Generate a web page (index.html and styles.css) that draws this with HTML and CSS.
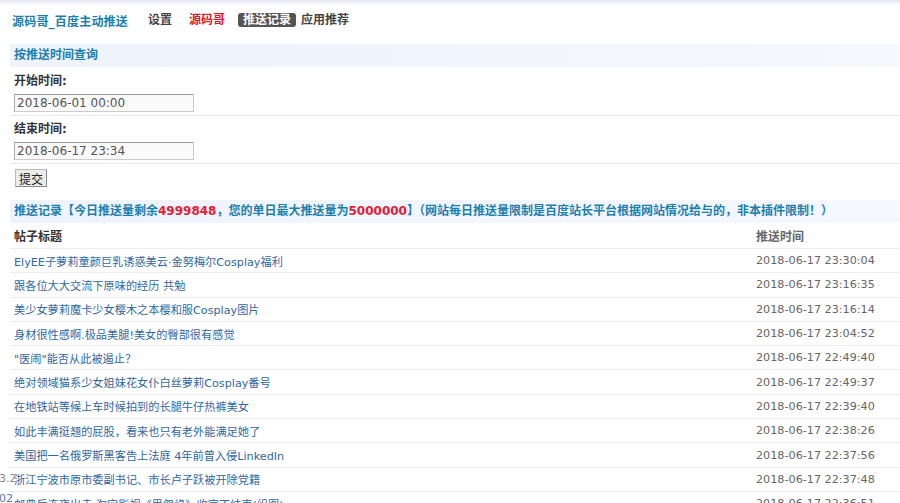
FILE: index.html
```html
<!DOCTYPE html>
<html lang="zh-CN">
<head>
    <meta charset="UTF-8">
    <title>源码哥_百度主动推送 - 推送记录</title>
    <link rel="stylesheet" href="styles.css">
</head>
<body>
    <div class="topbar"></div>
    <div class="wrap">
        <div class="nav">
            <span class="brand">源码哥_百度主动推送</span>
            <a href="#">设置</a>
            <a href="#" class="hot">源码哥</a>
            <a href="#" class="current">推送记录</a>
            <a href="#" class="last">应用推荐</a>
        </div>

        <form class="box">
            <h3 class="box-title">按推送时间查询</h3>
            <div class="field">
                <label>开始时间:</label>
                <input type="text" value="2018-06-01 00:00">
            </div>
            <div class="field">
                <label>结束时间:</label>
                <input type="text" value="2018-06-17 23:34">
            </div>
            <div class="submit-row">
                <button type="button">提交</button>
            </div>
        </form>

        <h3 class="box-title">推送记录【今日推送量剩余<em>4999848</em>，您的单日最大推送量为<em>5000000</em>】（网站每日推送量限制是百度站长平台根据网站情况给与的，非本插件限制！）</h3>

        <table class="log">
            <thead>
                <tr>
                    <th>帖子标题</th>
                    <th class="time">推送时间</th>
                </tr>
            </thead>
            <tbody>
                <tr><td><a href="#">ElyEE子萝莉童颜巨乳诱惑美云·金努梅尔Cosplay福利</a></td><td class="time">2018-06-17 23:30:04</td></tr>
                <tr><td><a href="#">跟各位大大交流下原味的经历 共勉</a></td><td class="time">2018-06-17 23:16:35</td></tr>
                <tr><td><a href="#">美少女萝莉魔卡少女樱木之本樱和服Cosplay图片</a></td><td class="time">2018-06-17 23:16:14</td></tr>
                <tr><td><a href="#">身材很性感啊.极品美腿!美女的臀部很有感觉</a></td><td class="time">2018-06-17 23:04:52</td></tr>
                <tr><td><a href="#">"医闹"能否从此被遏止？</a></td><td class="time">2018-06-17 22:49:40</td></tr>
                <tr><td><a href="#">绝对领域猫系少女姐妹花女仆白丝萝莉Cosplay番号</a></td><td class="time">2018-06-17 22:49:37</td></tr>
                <tr><td><a href="#">在地铁站等候上车时候拍到的长腿牛仔热裤美女</a></td><td class="time">2018-06-17 22:39:40</td></tr>
                <tr><td><a href="#">如此丰满挺翘的屁股，看来也只有老外能满足她了</a></td><td class="time">2018-06-17 22:38:26</td></tr>
                <tr><td><a href="#">美国把一名俄罗斯黑客告上法庭 4年前曾入侵LinkedIn</a></td><td class="time">2018-06-17 22:37:56</td></tr>
                <tr><td><a href="#">浙江宁波市原市委副书记、市长卢子跃被开除党籍</a></td><td class="time">2018-06-17 22:37:48</td></tr>
                <tr><td><a href="#">邮典后连夜出走 淘宝影视《思怨缘》收官不结束(组图)</a></td><td class="time">2018-06-17 22:36:51</td></tr>
            </tbody>
        </table>
    </div>

    <div class="side-peek">
        <span class="v">3.2</span>
        <span class="n">02</span>
    </div>
</body>
</html>
```

FILE: styles.css
```css
html, body {
    margin: 0;
    padding: 0;
    height: 100%;
    overflow: hidden;
    background: #fff;
    font-family: "DejaVu Sans", "Noto Sans CJK SC", sans-serif;
    font-size: 12px;
    color: #333;
}

.topbar {
    height: 4px;
    background: linear-gradient(#e2e8f3, #f3f6fb);
}

.wrap {
    padding-left: 10px;
}

/* top navigation */
.nav {
    display: flex;
    align-items: center;
    height: 32px;
    margin-left: 2px;
    margin-bottom: 8px;
    font-weight: bold;
}

.nav .brand {
    color: #1b7eaa;
    margin-right: 20px;
    letter-spacing: 0.2px;
}

.nav a {
    color: #444;
    text-decoration: none;
    margin-right: 17px;
    line-height: 14px;
}

    .nav a.hot {
        color: #d4202c;
        margin-right: 13px;
    }

    .nav a.current {
        background: #555;
        color: #fff;
        padding: 0 5px;
        border-radius: 3px;
        margin-right: 5px;
    }

/* boxes */
.box {
    margin: 0;
}

.box-title {
    margin: 0;
    height: 23px;
    line-height: 23px;
    padding-left: 4px;
    font-size: 12px;
    font-weight: bold;
    color: #1b80ad;
    background: linear-gradient(90deg, #eef3fc, #f3f6fd 70%, #f6f8fe);
    white-space: nowrap;
}

    .box-title em {
        font-style: normal;
        color: #e0203a;
    }

.field {
    padding: 3px 4px 3px;
    border-bottom: 1px solid #e6e6e6;
}

    .field + .field {
        padding-top: 2px;
    }

    .field label {
        display: block;
        height: 22px;
        line-height: 22px;
        font-weight: bold;
        color: #333;
    }

    .field input {
        display: block;
        box-sizing: border-box;
        width: 180px;
        height: 18px;
        margin-top: 2px;
        padding: 0 2px;
        border: 1px solid #ccc;
        border-top-color: #999;
        border-left-color: #aaa;
        background: #fafafa;
        font-family: "DejaVu Sans", sans-serif;
        font-size: 12px;
        color: #555;
    }

.submit-row {
    padding: 5px 5px 13px;
}

    .submit-row button {
        display: block;
        box-sizing: border-box;
        height: 18px;
        padding: 0 3px;
        border: 1px solid #888;
        border-top-color: #bbb;
        border-left-color: #bbb;
        background: #ececec;
        font-family: "Noto Sans CJK SC", sans-serif;
        font-size: 12px;
        line-height: 15px;
        color: #222;
    }

/* record table */
.log {
    width: 100%;
    border-collapse: collapse;
}

    .log th {
        height: 25px;
        padding: 0 4px;
        text-align: left;
        font-weight: bold;
        color: #333;
        border-bottom: 1px solid #ececec;
    }

    .log td {
        box-sizing: border-box;
        height: 24.3px;
        padding: 0 4px;
        font-size: 11.2px;
        white-space: nowrap;
        border-bottom: 1px solid #ececec;
    }

        .log td a {
            color: #33679e;
            text-decoration: none;
        }

    .log .time {
        width: 140px;
        color: #666;
    }

.side-peek {
    position: absolute;
    left: -1px;
    top: 470px;
    display: flex;
    flex-direction: column;
    font-size: 11px;
    line-height: 18px;
    color: #888;
}

    .side-peek .n {
        color: #5b7ba0;
        margin-top: 2px;
    }
```
